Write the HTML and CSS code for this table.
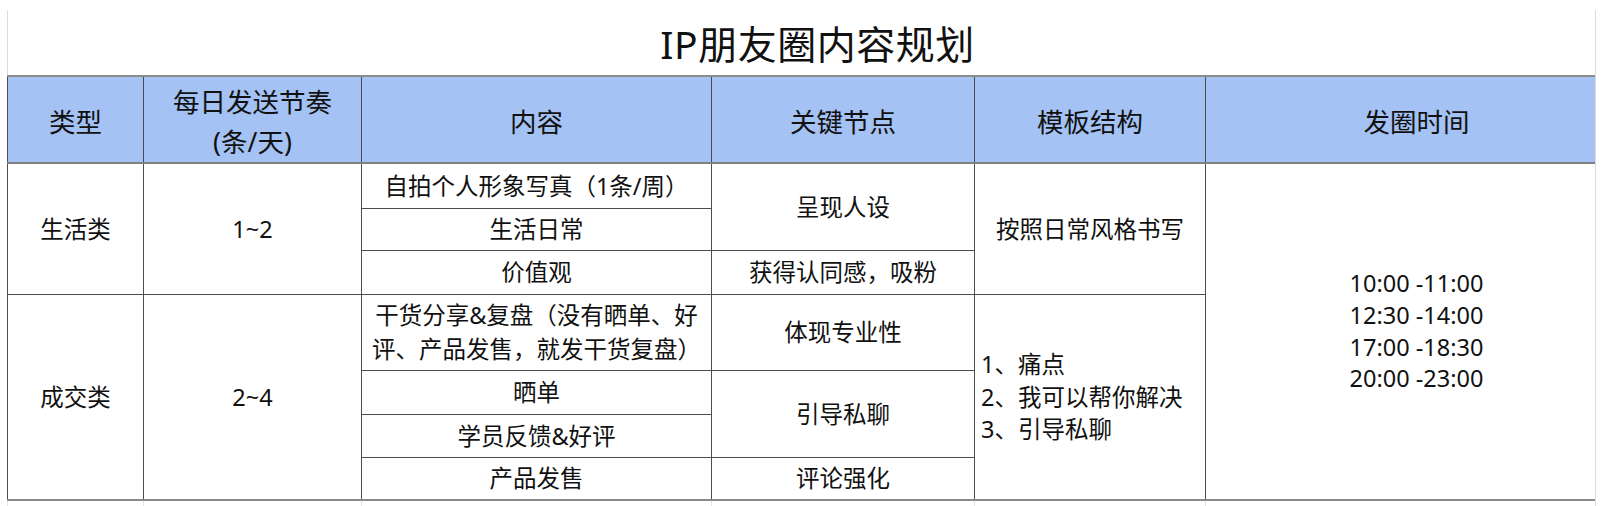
FILE: index.html
```html
<!DOCTYPE html>
<html lang="zh-CN">
<head>
<meta charset="utf-8">
<title>IP朋友圈内容规划</title>
<link rel="stylesheet" href="styles.css">
</head>
<body>
<div class="sheet">
  <div class="title">IP朋友圈内容规划</div>
  <table class="grid">
    <colgroup>
      <col class="c1"><col class="c2"><col class="c3"><col class="c4"><col class="c5"><col class="c6">
    </colgroup>
    <thead>
      <tr class="head">
        <th>类型</th>
        <th>每日发送节奏<br>(条/天)</th>
        <th>内容</th>
        <th>关键节点</th>
        <th>模板结构</th>
        <th>发圈时间</th>
      </tr>
    </thead>
    <tbody>
      <tr class="r45">
        <td rowspan="3">生活类</td>
        <td rowspan="3">1~2</td>
        <td>自拍个人形象写真（1条/周）</td>
        <td rowspan="2">呈现人设</td>
        <td rowspan="3">按照日常风格书写</td>
        <td rowspan="7" class="times">10:00 -11:00<br>12:30 -14:00<br>17:00 -18:30<br>20:00 -23:00</td>
      </tr>
      <tr class="r42">
        <td>生活日常</td>
      </tr>
      <tr class="r44">
        <td>价值观</td>
        <td>获得认同感，吸粉</td>
      </tr>
      <tr class="r76">
        <td rowspan="4">成交类</td>
        <td rowspan="4">2~4</td>
        <td class="two">干货分享&amp;复盘（没有晒单、好<br>评、产品发售，就发干货复盘）</td>
        <td>体现专业性</td>
        <td rowspan="4" class="list">1、痛点<br>2、我可以帮你解决<br>3、引导私聊</td>
      </tr>
      <tr class="r44">
        <td>晒单</td>
        <td rowspan="2">引导私聊</td>
      </tr>
      <tr class="r43">
        <td>学员反馈&amp;好评</td>
      </tr>
      <tr class="r43">
        <td>产品发售</td>
        <td>评论强化</td>
      </tr>
      <tr class="pad">
        <td></td><td></td><td></td><td></td><td></td><td></td>
      </tr>
    </tbody>
  </table>
</div>
</body>
</html>
```

FILE: styles.css
```css
html, body {
  margin: 0;
  padding: 0;
  background: #ffffff;
}

body {
  font-family: "Noto Sans", "Noto Sans CJK SC", sans-serif;
  color: #111111;
  overflow: hidden;
}

.sheet {
  margin: 10px 0 0 7px;
  width: 1588px;
  border-right: 1px solid #dcdcdc;
  overflow: hidden;
}

.title {
  width: 1620px;
  height: 65px;
  box-sizing: border-box;
  border-left: 1px solid #dcdcdc;
  padding-top: 3px;
  font-size: 39px;
  line-height: 62px;
  text-align: center;
  letter-spacing: 0.5px;
}

.grid {
  border-collapse: collapse;
  table-layout: fixed;
  width: 1620px;
}

.c1 { width: 136px; }
.c2 { width: 218px; }
.c3 { width: 350px; }
.c4 { width: 263px; }
.c5 { width: 231px; }
.c6 { width: 422px; }

.grid th,
.grid td {
  border: 1px solid #4d4d4d;
  padding: 0 4px;
  text-align: center;
  vertical-align: middle;
  white-space: nowrap;
}

.grid th {
  background: #a4c2f4;
  font-weight: normal;
  font-size: 26.5px;
  line-height: 40px;
  padding-top: 5px;
  border-top: 2px solid #8c8c8c;
  border-bottom: 2px solid #808080;
}

.head { height: 85px; }

.grid td {
  font-size: 23.5px;
  line-height: 32px;
}

.r45 { height: 45px; }
.r44 { height: 44px; }
.r42 { height: 42px; }
.r43 { height: 43px; }
.r76 { height: 76px; }

.grid td.two {
  line-height: 34px;
}

.grid td.times {
  line-height: 31.7px;
}

.grid td.list {
  text-align: left;
  padding-left: 6px;
  line-height: 32.5px;
}

.pad { height: 10px; }

.grid .pad td {
  border-top: 2px solid #8a8a8a;
  border-left: 1px solid #e4e4e4;
  border-right: 1px solid #e4e4e4;
  border-bottom: none;
}
```
